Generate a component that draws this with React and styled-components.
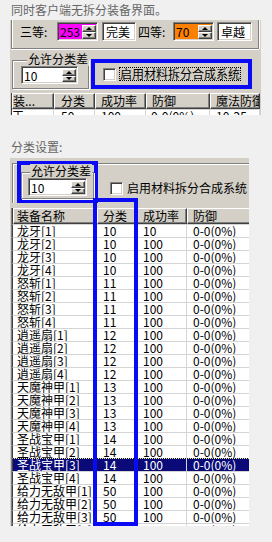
import React from 'react';
import styled, { createGlobalStyle } from 'styled-components';

const GlobalStyle = createGlobalStyle`
  html, body {
    margin: 0;
    padding: 0;
    background: #f0f0f0;
  }
  body {
    font-family: "Noto Sans CJK SC", "Liberation Sans", sans-serif;
    font-size: 12px;
    color: #000;
  }
  * { box-sizing: border-box; }
`;

const PANEL = '#d4d0c8';
const BLUE = '#0a0af5';

const items = [
  ['龙牙', 10], ['怒斩', 11], ['逍遥扇', 12], ['天魔神甲', 13], ['圣战宝甲', 14], ['给力无敌甲', 50],
];

const rows = [];
items.forEach(([name, cat]) => {
  [1, 2, 3, 4].forEach((n) => {
    rows.push({
      name: `${name}[${n}]`,
      cat: String(cat),
      rate: rows.length === 0 ? '10' : '100',
      def: '0-0(0%)',
    });
  });
});

const App = () => {
  return (
    <Page>
      <GlobalStyle />
      <Caption>同时客户端无拆分装备界面。</Caption>

      <TopPanel>
        <GradeGroup>
          <GradeLabel $w={37}>三等:</GradeLabel>
          <SpinEdit value='253' width={41} bg='#ff00ff' />
          <TextBox $w={34} $ml={4}>完美</TextBox>
          <GradeLabel $w={35} $ml={2}>四等:</GradeLabel>
          <SpinEdit value='70' width={41} bg='#ff7f00' />
          <TextBox $w={35} $ml={3}>卓越</TextBox>
        </GradeGroup>

        <OptionRow>
          <AllowGroup>
            <GroupTitle $ml={6}>允许分类差</GroupTitle>
            <SpinEdit value='10' width={57} height={18} />
          </AllowGroup>
          <MarkBox>
            <CheckBox />
            <CheckLabel $focus>启用材料拆分合成系统</CheckLabel>
          </MarkBox>
        </OptionRow>

        <TopList>
          <HeaderRow>
            <HeaderCell $w={42} $pl={0}>装...</HeaderCell>
            <HeaderCell $w={41} $pl={6}>分类</HeaderCell>
            <HeaderCell $w={51} $pl={5}>成功率</HeaderCell>
            <HeaderCell $w={64} $pl={5}>防御</HeaderCell>
            <HeaderCell $w={50} $pl={5}>魔法防御</HeaderCell>
          </HeaderRow>
          <Row>
            <Cell $w={42} $pl={0}>王...</Cell>
            <Cell $w={41} $pl={7}>50</Cell>
            <Cell $w={51} $pl={6}>100</Cell>
            <Cell $w={64} $pl={5}>0-0(0%)</Cell>
            <Cell $w={50} $pl={6}>10-25</Cell>
          </Row>
        </TopList>
      </TopPanel>

      <Caption $mt={22}>分类设置:</Caption>

      <BottomPanel>
        <SettingsArea>
          <SettingsRow>
            <MarkGroup>
              <SmallGroup>
                <GroupTitle $ml={2}>允许分类差</GroupTitle>
                <SpinEdit value='10' width={59} height={18} />
              </SmallGroup>
            </MarkGroup>
            <CheckWrap>
              <CheckBox />
              <CheckLabel>启用材料拆分合成系统</CheckLabel>
            </CheckWrap>
          </SettingsRow>
        </SettingsArea>

        <ItemList>
          <HeaderRow $h={16}>
            <HeaderCell $w={84} $pl={3}>装备名称</HeaderCell>
            <HeaderCell $w={40} $pl={5}>分类</HeaderCell>
            <HeaderCell $w={50} $pl={5}>成功率</HeaderCell>
            <HeaderCell $w={70} $pl={5}>防御</HeaderCell>
          </HeaderRow>
          {rows.map((r, i) => (
            <Row key={i} $selected={i === 18}>
              <Cell $w={84} $pl={4}>{r.name}</Cell>
              <Cell $w={40} $pl={6}>{r.cat}</Cell>
              <Cell $w={50} $pl={6}>{r.rate}</Cell>
              <Cell $w={70} $pl={6}>{r.def}</Cell>
            </Row>
          ))}
        </ItemList>

        <ColumnMark />
      </BottomPanel>
    </Page>
  );
};

const SpinEdit = ({ value, width, height = 19, bg = '#fff' }) => (
  <SpinBox $w={width} $h={height} $bg={bg}>
    <SpinValue>{value}</SpinValue>
    <SpinButtons>
      <SpinBtn><Arrow $up /></SpinBtn>
      <SpinBtn><Arrow /></SpinBtn>
    </SpinButtons>
  </SpinBox>
);

export default App;

const Page = styled.div`
  width: 272px;
  height: 542px;
  overflow: hidden;
`;

const Caption = styled.div`
  height: 20px;
  line-height: 20px;
  margin-top: ${(p) => p.$mt || 0}px;
  padding-left: 11px;
  color: #666;
  white-space: nowrap;
`;

const TopPanel = styled.div`
  margin-left: 10px;
  width: 251px;
  height: 95px;
  background: ${PANEL};
  overflow: hidden;
`;

const GradeGroup = styled.div`
  display: flex;
  align-items: flex-start;
  margin-left: 1px;
  width: 248px;
  height: 29px;
  padding: 2px 0 0 8px;
  border: 1px solid #808080;
  border-top: none;
  box-shadow: inset 1px 0 0 #fff, 0 1px 0 #fff, 1px 0 0 #fff;
`;

const GradeLabel = styled.div`
  width: ${(p) => p.$w}px;
  margin-left: ${(p) => p.$ml || 0}px;
  line-height: 19px;
  white-space: nowrap;
`;

const sunken = `
  border: 1px solid;
  border-color: #808080 #fff #fff #808080;
  box-shadow: inset 1px 1px 0 #404040, inset -1px -1px 0 ${PANEL};
`;

const SpinBox = styled.div`
  ${sunken}
  display: flex;
  width: ${(p) => p.$w}px;
  height: ${(p) => p.$h}px;
  background: ${(p) => p.$bg};
  padding: 2px 1px 1px 2px;
  flex-shrink: 0;
`;

const SpinValue = styled.div`
  flex: 1;
  line-height: ${12}px;
  padding-top: 1px;
`;

const SpinButtons = styled.div`
  display: flex;
  flex-direction: column;
  width: 14px;
  height: 100%;
`;

const SpinBtn = styled.div`
  flex: 1;
  display: flex;
  align-items: center;
  justify-content: center;
  background: ${PANEL};
  border: 1px solid;
  border-color: #fff #404040 #404040 #fff;
  box-shadow: inset -1px -1px 0 #808080;
`;

const Arrow = styled.span`
  width: 0;
  height: 0;
  border-left: 3px solid transparent;
  border-right: 3px solid transparent;
  ${(p) => (p.$up ? 'border-bottom: 3px solid #000;' : 'border-top: 3px solid #000;')}
`;

const TextBox = styled.div`
  ${sunken}
  width: ${(p) => p.$w}px;
  height: 19px;
  margin-left: ${(p) => p.$ml || 0}px;
  background: #fff;
  padding: 2px 0 0 3px;
  line-height: 14px;
  white-space: nowrap;
  flex-shrink: 0;
`;

const OptionRow = styled.div`
  display: flex;
  align-items: flex-start;
  margin-top: 10px;
  height: 30px;
`;

const etched = `
  border: 1px solid #808080;
  box-shadow: inset 1px 1px 0 #fff, 1px 1px 0 #fff;
`;

const AllowGroup = styled.div`
  ${etched}
  display: flex;
  flex-direction: column;
  align-items: flex-start;
  margin: 1px 0 0 2px;
  width: 77px;
  height: 29px;
  padding-left: 8px;
`;

const GroupTitle = styled.div`
  margin: -9px 0 0 ${(p) => p.$ml}px;
  padding: 0 1px;
  background: ${PANEL};
  line-height: 14px;
  height: 14px;
  white-space: nowrap;
`;

const MarkBox = styled.div`
  display: flex;
  align-items: center;
  margin-left: 2px;
  width: 161px;
  height: 30px;
  padding-left: 8px;
  border: 4px solid ${BLUE};
`;

const CheckBox = styled.div`
  ${sunken}
  width: 13px;
  height: 13px;
  background: #fff;
  flex-shrink: 0;
`;

const CheckLabel = styled.div`
  margin-left: ${(p) => (p.$focus ? 3 : 4)}px;
  height: ${(p) => (p.$focus ? 14 : 13)}px;
  line-height: 12px;
  border: ${(p) => (p.$focus ? '1px dotted #000' : 'none')};
  white-space: nowrap;
`;

const TopList = styled.div`
  margin: 4px 0 0 1px;
  width: 249px;
  border-left: 1px solid #404040;
  background: #fff;
`;

const HeaderRow = styled.div`
  display: flex;
  height: ${(p) => p.$h || 16}px;
  background: ${PANEL};
`;

const HeaderCell = styled.div`
  flex-shrink: 0;
  width: ${(p) => p.$w}px;
  padding-left: ${(p) => p.$pl}px;
  border: 1px solid;
  border-color: #fff #404040 #404040 #fff;
  box-shadow: inset -1px -1px 0 #808080;
  line-height: 13px;
  white-space: nowrap;
  overflow: hidden;
`;

const Row = styled.div`
  display: flex;
  height: 13px;
  border-top: 1px ${(p) => (p.$selected ? 'dotted #f4ee7a' : 'solid #d4d4d4')};
  background: ${(p) => (p.$selected ? '#0a0a78' : '#fff')};
  color: ${(p) => (p.$selected ? '#fff' : '#000')};
`;

const Cell = styled.div`
  flex-shrink: 0;
  width: ${(p) => p.$w}px;
  padding-left: ${(p) => p.$pl}px;
  border-right: 1px solid #d4d4d4;
  line-height: 12px;
  white-space: nowrap;
  overflow: hidden;
`;

const BottomPanel = styled.div`
  position: relative;
  margin: 1px 0 0 10px;
  width: 239px;
  height: 368px;
  background: ${PANEL};
  overflow: hidden;
`;

const SettingsArea = styled.div`
  margin: 5px 0 0 2px;
  border-top: 1px solid #808080;
  border-left: 1px solid #808080;
  box-shadow: inset 1px 1px 0 #fff;
`;

const SettingsRow = styled.div`
  display: flex;
  align-items: flex-start;
  margin-top: -3px;
  padding-left: 4px;
`;

const MarkGroup = styled.div`
  width: 81px;
  height: 42px;
  padding-top: 7px;
  border: 4px solid ${BLUE};
`;

const SmallGroup = styled.div`
  ${etched}
  display: flex;
  flex-direction: column;
  align-items: flex-start;
  width: 73px;
  height: 27px;
  padding-left: 6px;
`;

const CheckWrap = styled.div`
  display: flex;
  align-items: center;
  margin: 21px 0 0 12px;
`;

const ItemList = styled.div`
  margin: 5px 0 0 1px;
  border-left: 1px solid #808080;
  background: #fff;
  & > * {
    border-left: 1px solid #404040;
  }
`;

const ColumnMark = styled.div`
  position: absolute;
  left: 83px;
  top: 40px;
  width: 45px;
  height: 328px;
  border: 4px solid ${BLUE};
`;
